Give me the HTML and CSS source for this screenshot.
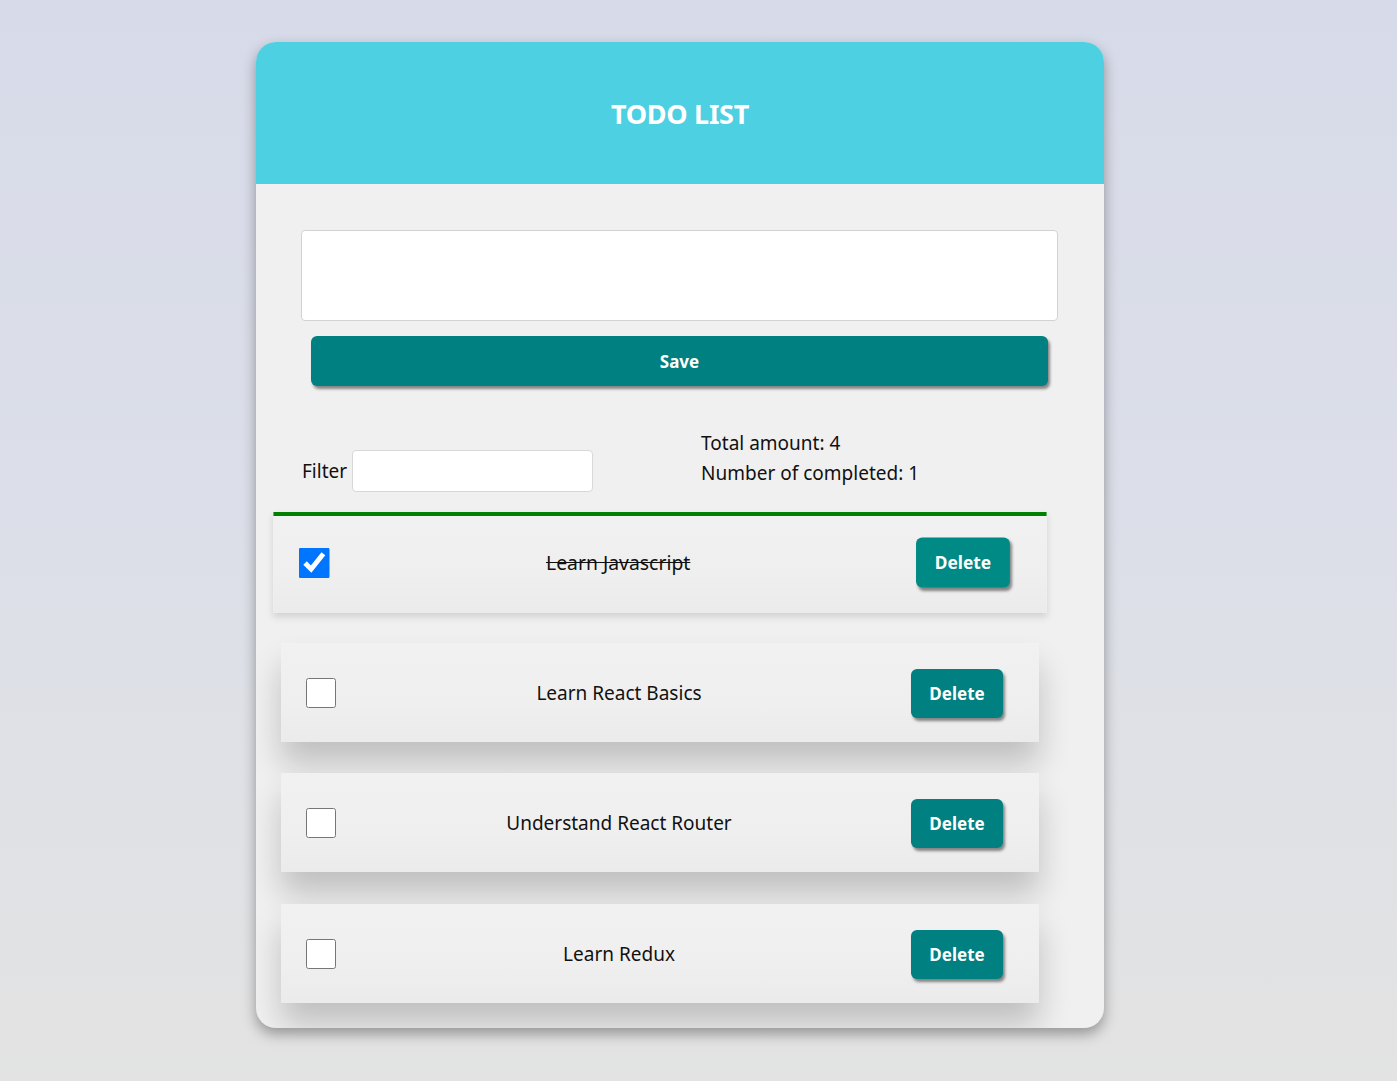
FILE: index.html
```html
<!DOCTYPE html>
<html lang="en">
<head>
<meta charset="utf-8">
<title>Todo List</title>
<link rel="stylesheet" href="styles.css">
</head>
<body>
<div class="page">
  <div class="card">
    <header class="header">
      <h1 class="title">TODO LIST</h1>
    </header>
    <main class="content">
      <form class="add-form">
        <textarea class="add-input"></textarea>
        <button type="button" class="save-btn">Save</button>
      </form>
      <div class="filter-row">
        <label class="filter-label">Filter <input class="filter-input" type="text"></label>
        <div class="stats">
          <div class="stat">Total amount: 4</div>
          <div class="stat">Number of completed: 1</div>
        </div>
      </div>
      <ul class="todo-list">
        <li class="todo done">
          <input class="todo-check" type="checkbox" checked>
          <span class="todo-text">Learn Javascript</span>
          <button type="button" class="delete-btn">Delete</button>
        </li>
        <li class="todo">
          <input class="todo-check" type="checkbox">
          <span class="todo-text">Learn React Basics</span>
          <button type="button" class="delete-btn">Delete</button>
        </li>
        <li class="todo">
          <input class="todo-check" type="checkbox">
          <span class="todo-text">Understand React Router</span>
          <button type="button" class="delete-btn">Delete</button>
        </li>
        <li class="todo">
          <input class="todo-check" type="checkbox">
          <span class="todo-text">Learn Redux</span>
          <button type="button" class="delete-btn">Delete</button>
        </li>
      </ul>
    </main>
  </div>
</div>
</body>
</html>
```
FILE: styles.css
```css
* { box-sizing: border-box; }
html, body { margin: 0; padding: 0; }
body {
  min-height: 1081px;
  background: linear-gradient(180deg, #d7dbe9 0%, #dcdfe8 50%, #e3e3e3 100%);
  font-family: "Noto Sans", "Open Sans", sans-serif;
  color: #111;
}
.page {
  padding: 42px 0 40px 256px;
}
.card {
  width: 848px;
  background: #f0f0f0;
  border-radius: 20px;
  overflow: hidden;
  box-shadow: 0 6px 14px rgba(0, 0, 0, 0.35);
}
.header {
  height: 142px;
  background: #4dd0e1;
  display: flex;
  align-items: center;
  justify-content: center;
}
.title {
  margin: 0;
  color: #fff;
  font-size: 27px;
  font-weight: 700;
  letter-spacing: -0.3px;
}
.content {
  padding: 46px 0 25px 0;
}
.add-form {
  margin: 0 46px 0 45px;
  display: flex;
  flex-direction: column;
}
.add-input {
  display: block;
  width: 100%;
  height: 91px;
  border: 1px solid #d2d2d2;
  border-radius: 4px;
  background: #fff;
  resize: none;
  margin: 0;
}
.save-btn {
  margin: 15px 10px 0;
  height: 50px;
  border: none;
  border-radius: 6px;
  background: #008080;
  color: #fff;
  font-family: inherit;
  font-size: 17px;
  font-weight: 700;
  box-shadow: 2px 3px 3px rgba(0, 0, 0, 0.45);
}
.filter-row {
  margin: 41px 0 0 46px;
  display: flex;
  align-items: flex-end;
  height: 65px;
}
.filter-label {
  display: flex;
  align-items: center;
  gap: 5px;
  font-size: 19px;
}
.filter-input {
  width: 241px;
  height: 42px;
  border: 1px solid #d8d8d8;
  border-radius: 4px;
  background: #fff;
  margin: 0;
}
.stats {
  margin-left: 108px;
  font-size: 19px;
  line-height: 30px;
  padding-bottom: 4px;
}
.todo-list {
  list-style: none;
  margin: 21px 0 0 25px;
  padding: 0;
  width: 758px;
  display: flex;
  flex-direction: column;
  gap: 31px;
}
.todo {
  height: 99px;
  display: flex;
  align-items: center;
  padding: 1px 36px 0 25px;
  background: linear-gradient(180deg, #f1f1f1 0%, #efefef 60%, #ebebeb 100%);
  box-shadow: 0 22px 30px rgba(0, 0, 0, 0.2);
  font-size: 19px;
}
.todo:nth-child(4) {
  margin-top: 1px;
}
.todo.done {
  padding-top: 0;
  transform: scale(1.02);
  box-shadow: inset 0 4px 0 #008000, 0 4px 7px rgba(0, 0, 0, 0.13);
}
.todo-check {
  width: 30px;
  height: 30px;
  margin: 0;
  flex: none;
}
.todo-text {
  flex: 1;
  text-align: center;
  margin-right: 9px;
}
.done .todo-text {
  text-decoration: line-through;
}
.delete-btn {
  width: 92px;
  height: 49px;
  border: none;
  border-radius: 6px;
  background: #008080;
  color: #fff;
  font-family: inherit;
  font-size: 17px;
  font-weight: 700;
  box-shadow: 2px 3px 3px rgba(0, 0, 0, 0.45);
}
.done .delete-btn {
  background: #008a85;
}
```
